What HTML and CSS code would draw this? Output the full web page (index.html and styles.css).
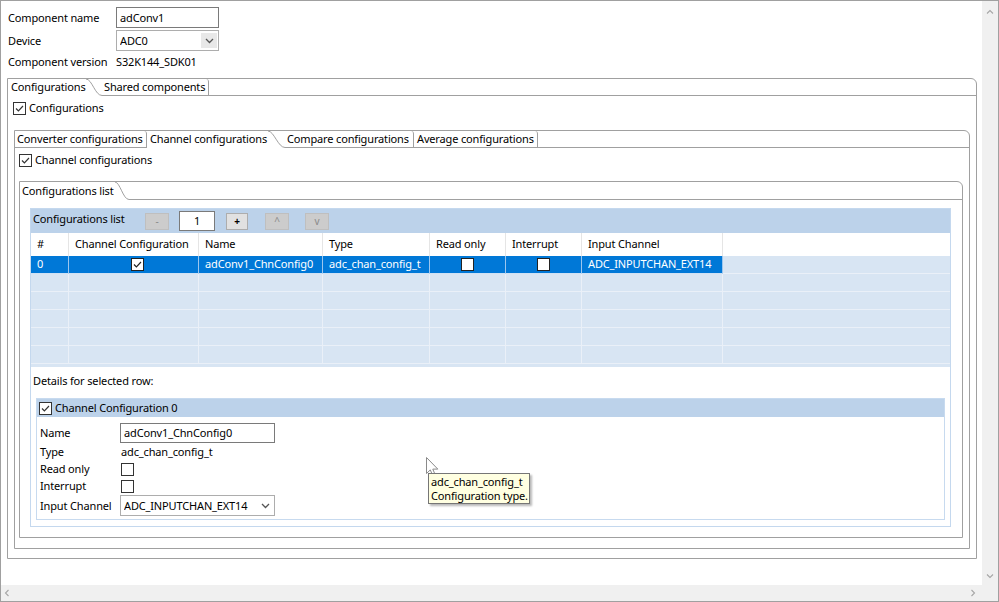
FILE: index.html
```html
<!DOCTYPE html>
<html>
<head>
<meta charset="utf-8">
<link rel="stylesheet" href="styles.css">
</head>
<body>
<div class="window">
  <div class="pane">
    <div class="form">
      <div class="lbl">Component name</div>
      <div class="input w103">adConv1</div>
      <div class="lbl">Device</div>
      <div class="select w103 sel-dev"><span class="stext">ADC0</span><span class="dd"><svg width="9" height="6" viewBox="0 0 9 6"><path d="M1 1l3.5 3.5L8 1" fill="none" stroke="#555" stroke-width="1.3"/></svg></span></div>
      <div class="lbl">Component version</div>
      <div class="val">S32K144_SDK01</div>
    </div>

    <div class="folder f1">
      <div class="tabs">
        <div class="tab sel t-conf">Configurations</div>
        <svg class="curve" width="16" height="17" viewBox="0 0 16 17"><path d="M0 0C6 0 9 16.5 16 16.5" fill="none" stroke="#a0a0a0"/></svg>
        <div class="tab un t-shared">Shared components</div>
        <div class="fill"></div>
      </div>
      <div class="fbody fb1">
        <div class="chkrow">
          <svg class="cb" width="13" height="13" viewBox="0 0 13 13"><rect x=".5" y=".5" width="12" height="12" fill="#fff" stroke="#333"/><path d="M3 6.5l2.4 2.4L10 4" fill="none" stroke="#333" stroke-width="1.2"/></svg>
          <span>Configurations</span>
        </div>

        <div class="folder f2">
          <div class="tabs">
            <div class="tab un t-conv">Converter configurations</div>
            <div class="tab sel t-chan">Channel configurations</div>
            <svg class="curve" width="17" height="17" viewBox="0 0 17 17"><path d="M0 0C6 0 10 16.5 17 16.5" fill="none" stroke="#a0a0a0"/></svg>
            <div class="tab un t-comp">Compare configurations</div>
            <div class="tab un t-avg">Average configurations</div>
            <div class="fill"></div>
          </div>
          <div class="fbody fb2">
            <div class="chkrow">
              <svg class="cb" width="13" height="13" viewBox="0 0 13 13"><rect x=".5" y=".5" width="12" height="12" fill="#fff" stroke="#333"/><path d="M3 6.5l2.4 2.4L10 4" fill="none" stroke="#333" stroke-width="1.2"/></svg>
              <span>Channel configurations</span>
            </div>

            <div class="folder f3">
              <div class="tabs tabs3">
                <div class="tab sel t-list">Configurations list</div>
                <svg class="curve" width="14" height="18" viewBox="0 0 14 18"><path d="M0 0C5 0 8 17.5 14 17.5" fill="none" stroke="#a0a0a0"/></svg>
                <div class="fill"></div>
              </div>
              <div class="fbody fb3">
                <div class="section">
                  <div class="shead">
                    <div class="stitle">Configurations list</div>
                    <div class="btn dis b-minus">-</div>
                    <div class="numin">1</div>
                    <div class="btn b-plus">+</div>
                    <div class="btn dis b-up">^</div>
                    <div class="btn dis b-down">v</div>
                  </div>
                  <div class="grid head">
                    <div class="hc">#</div>
                    <div class="hc">Channel Configuration</div>
                    <div class="hc">Name</div>
                    <div class="hc">Type</div>
                    <div class="hc">Read only</div>
                    <div class="hc">Interrupt</div>
                    <div class="hc">Input Channel</div>
                    <div class="hc last"></div>
                  </div>
                  <div class="grid row selrow">
                    <div class="c s">0</div>
                    <div class="c s ctr cc"><svg class="cb" width="13" height="13" viewBox="0 0 13 13"><rect x=".5" y=".5" width="12" height="12" fill="#fff" stroke="#222"/><path d="M3 6.5l2.4 2.4L10 4" fill="none" stroke="#222" stroke-width="1.2"/></svg></div>
                    <div class="c s">adConv1_ChnConfig0</div>
                    <div class="c s">adc_chan_config_t</div>
                    <div class="c s ctr"><svg class="cb" width="13" height="13" viewBox="0 0 13 13"><rect x=".5" y=".5" width="12" height="12" fill="#fff" stroke="#222"/></svg></div>
                    <div class="c s ctr"><svg class="cb" width="13" height="13" viewBox="0 0 13 13"><rect x=".5" y=".5" width="12" height="12" fill="#fff" stroke="#222"/></svg></div>
                    <div class="c s">ADC_INPUTCHAN_EXT14</div>
                    <div class="c last"></div>
                  </div>
                  <div class="grid row"><div class="c"></div><div class="c"></div><div class="c"></div><div class="c"></div><div class="c"></div><div class="c"></div><div class="c"></div><div class="c last"></div></div>
                  <div class="grid row"><div class="c"></div><div class="c"></div><div class="c"></div><div class="c"></div><div class="c"></div><div class="c"></div><div class="c"></div><div class="c last"></div></div>
                  <div class="grid row"><div class="c"></div><div class="c"></div><div class="c"></div><div class="c"></div><div class="c"></div><div class="c"></div><div class="c"></div><div class="c last"></div></div>
                  <div class="grid row"><div class="c"></div><div class="c"></div><div class="c"></div><div class="c"></div><div class="c"></div><div class="c"></div><div class="c"></div><div class="c last"></div></div>
                  <div class="grid row"><div class="c"></div><div class="c"></div><div class="c"></div><div class="c"></div><div class="c"></div><div class="c"></div><div class="c"></div><div class="c last"></div></div>
                  <div class="strip"></div>
                  <div class="dlabel">Details for selected row:</div>
                  <div class="group">
                    <div class="ghead">
                      <svg class="cb" width="13" height="13" viewBox="0 0 13 13"><rect x=".5" y=".5" width="12" height="12" fill="#fff" stroke="#333"/><path d="M3 6.5l2.4 2.4L10 4" fill="none" stroke="#333" stroke-width="1.2"/></svg>
                      <span>Channel Configuration 0</span>
                    </div>
                    <div class="gbody">
                      <div class="glbl">Name</div>
                      <div class="input w155">adConv1_ChnConfig0</div>
                      <div class="glbl">Type</div>
                      <div class="gval">adc_chan_config_t</div>
                      <div class="glbl">Read only</div>
                      <div class="gval"><svg class="cb" width="13" height="13" viewBox="0 0 13 13"><rect x=".5" y=".5" width="12" height="12" fill="#fff" stroke="#333"/></svg></div>
                      <div class="glbl">Interrupt</div>
                      <div class="gval"><svg class="cb" width="13" height="13" viewBox="0 0 13 13"><rect x=".5" y=".5" width="12" height="12" fill="#fff" stroke="#333"/></svg></div>
                      <div class="glbl">Input Channel</div>
                      <div class="select w155"><span class="stext">ADC_INPUTCHAN_EXT14</span><span class="dd2"><svg width="9" height="6" viewBox="0 0 9 6"><path d="M1 1l3.5 3.5L8 1" fill="none" stroke="#555" stroke-width="1.3"/></svg></span></div>
                    </div>
                  </div>
                </div>
              </div>
            </div>
          </div>
        </div>
      </div>
    </div>
  </div>
  <div class="vscroll">
    <svg width="8" height="5" viewBox="0 0 8 5"><path d="M1 4.5L4 1.5L7 4.5" fill="none" stroke="#a6a6a6" stroke-width="1.1"/></svg>
    <svg width="8" height="5" viewBox="0 0 8 5"><path d="M1 .5L4 3.5L7 .5" fill="none" stroke="#a6a6a6" stroke-width="1.1"/></svg>
  </div>
  <div class="hscroll">
    <svg width="5" height="8" viewBox="0 0 5 8"><path d="M4.5 1L1.5 4L4.5 7" fill="none" stroke="#a6a6a6" stroke-width="1.1"/></svg>
    <svg width="5" height="8" viewBox="0 0 5 8"><path d="M.5 1L3.5 4L.5 7" fill="none" stroke="#a6a6a6" stroke-width="1.1"/></svg>
  </div>
  <div class="corner"></div>

  <svg class="cursor" width="13" height="20" viewBox="0 0 13 20"><path d="M.5 .5V16.5L4.3 12.9L6.8 18.8L9.2 17.8L6.8 12.1H11.8Z" fill="#fff" stroke="#8a8a8a" stroke-linejoin="round"/></svg>
  <div class="tooltip">adc_chan_config_t<br>Configuration type.</div>
</div>
</body>
</html>
```

FILE: styles.css
```css
* { box-sizing: border-box; }
html, body { margin: 0; padding: 0; background: #fff; }
body {
  font-family: "Noto Sans", "Open Sans", sans-serif;
  font-size: 11px;
  letter-spacing: -0.15px;
  color: #000;
}

.window {
  position: relative;
  width: 999px;
  height: 602px;
  border: 1px solid #a0a0a0;
  display: grid;
  grid-template-columns: 981px 16px;
  grid-template-rows: 584px 16px;
  overflow: hidden;
}

.pane {
  background: #fff;
  padding: 6px 0 0 6px;
  overflow: hidden;
}

/* scrollbars */
.vscroll {
  background: #f0f0f0;
  display: flex;
  flex-direction: column;
  justify-content: space-between;
  align-items: center;
  padding: 8px 0 6px 0;
}
.hscroll {
  background: #f0f0f0;
  display: flex;
  justify-content: space-between;
  align-items: center;
  padding: 0 6px 0 3px;
}
.corner { background: #f0f0f0; }

/* top form */
.form {
  display: grid;
  grid-template-columns: 108px 103px;
  grid-template-rows: 21px 21px 17px;
  row-gap: 2px;
  align-items: center;
  margin-left: 1px;
}
.lbl { line-height: 16px; white-space: nowrap; }
.val { line-height: 16px; white-space: nowrap; }
.input {
  height: 21px;
  border: 1px solid #7a7a7a;
  background: #fff;
  padding-left: 3px;
  line-height: 19px;
  white-space: nowrap;
  overflow: hidden;
}
.select {
  height: 21px;
  border: 1px solid #adadad;
  background: #fff;
  display: flex;
  align-items: center;
  padding-left: 3px;
  white-space: nowrap;
}
.select .stext { flex: 1; line-height: 19px; overflow: hidden; }
.dd {
  width: 16px;
  height: 15px;
  margin-right: 1px;
  background: #e8e8e8;
  display: flex;
  align-items: center;
  justify-content: center;
}
.dd2 {
  width: 16px;
  height: 15px;
  margin-right: 1px;
  display: flex;
  align-items: center;
  justify-content: center;
}
.w103 { width: 103px; }
.w155 { width: 155px; }

/* tab folders */
.folder {
  border: 1px solid #a0a0a0;
  border-top-right-radius: 6px;
  background: #fff;
}
.f1 { width: 970px; margin-top: 8px; }
.f2 { margin-top: 14px; margin-left: 1px; }
.f3 { margin-top: 13px; }

.tabs { display: flex; height: 17px; }
.tabs3 { height: 18px; }
.tab {
  height: 100%;
  line-height: 16px;
  white-space: nowrap;
  flex: none;
}
.tabs3 .tab { line-height: 17px; }
.tab.un {
  border-bottom: 1px solid #a0a0a0;
  border-right: 1px solid #a0a0a0;
  border-top-right-radius: 3px;
}
.tabs .fill { flex: 1; border-bottom: 1px solid #a0a0a0; }
.curve { flex: none; display: block; }

.t-conf { width: 78px; padding-left: 3px; }
.t-shared { width: 107px; padding-left: 2px; }
.t-conv { width: 132px; padding-left: 2px; }
.t-chan { width: 121px; padding-left: 3px; }
.t-comp { width: 129px; padding-left: 2px; }
.t-avg { width: 124px; padding-left: 3px; }
.t-list { width: 95px; padding-left: 2px; }

.fb1 { padding: 4px 6px 9px 5px; }
.fb2 { padding: 4px 6px 10px 4px; }
.fb3 { padding: 8px 11px 10px 10px; }

.chkrow {
  display: flex;
  align-items: center;
  gap: 3px;
  height: 16px;
  line-height: 16px;
}
.cb { display: block; flex: none; }

/* section */
.section {
  border: 1px solid #c4d8ee;
  background: #fff;
}
.shead {
  height: 24px;
  background: #bcd2ea;
  display: flex;
  align-items: center;
  padding-left: 2px;
}
.stitle { width: 112px; line-height: 16px; margin-top: -4px; white-space: nowrap; }
.btn {
  height: 17px;
  border: 1px solid #adadad;
  background: #e1e1e1;
  text-align: center;
  line-height: 15px;
  font-size: 10px;
  color: #000;
}
.btn.dis { background: #cccccc; border-color: #bfbfbf; color: #8a8a8a; }
.b-minus { width: 24px; }
.numin {
  width: 36px;
  height: 20px;
  margin-left: 10px;
  border: 1px solid #7a7a7a;
  background: #fff;
  text-align: center;
  line-height: 18px;
}
.b-plus { width: 22px; margin-left: 11px; font-weight: bold; }
.b-up { width: 24px; margin-left: 17px; }
.b-down { width: 24px; margin-left: 16px; }

.grid {
  display: grid;
  grid-template-columns: 38px 130px 124px 107px 76px 76px 141px 1fr;
}
.head { height: 23px; background: #fff; }
.hc {
  border-right: 1px solid #e5e5e5;
  padding-left: 6px;
  line-height: 22px;
  white-space: nowrap;
}
.hc.last { border-right: 0; }

.row { height: 18px; }
.c {
  background: #d8e5f3;
  border-right: 1px solid #eaf0f8;
  border-bottom: 1px solid #eaf0f8;
  padding-left: 6px;
  line-height: 16px;
  white-space: nowrap;
  overflow: hidden;
}
.c.last { border-right: 0; }
.c.s {
  background: #0078d7;
  color: #fff;
  border-right-color: #9cc6ee;
  border-bottom-color: #cfe1f4;
}
.c.ctr { display: flex; align-items: center; justify-content: center; padding-left: 0; }
.c.cc { padding-left: 8px; }

.strip { height: 3px; background: #d8e5f3; }

.dlabel { padding: 6px 0 9px 2px; line-height: 16px; }

.group {
  margin: 0 5px 6px 5px;
  border: 1px solid #c7daef;
}
.ghead {
  height: 18px;
  background: #bcd2ea;
  display: flex;
  align-items: center;
  gap: 3px;
  padding-left: 2px;
  line-height: 16px;
}
.gbody {
  display: grid;
  grid-template-columns: 80px 1fr;
  grid-template-rows: 20px 18px 16px 18px 21px;
  align-items: center;
  padding: 6px 0 3px 3px;
}
.gbody .input { height: 20px; line-height: 18px; }
.glbl { line-height: 16px; white-space: nowrap; }
.gval { line-height: 16px; padding-left: 1px; }

/* overlays */
.cursor { position: absolute; left: 425px; top: 456px; }
.tooltip {
  position: absolute;
  left: 427px;
  top: 472px;
  width: 102px;
  height: 31px;
  background: #ffffe1;
  border: 1px solid #767676;
  box-shadow: 2px 2px 2px rgba(0, 0, 0, 0.28);
  padding: 1px 0 0 2px;
  line-height: 14px;
  white-space: nowrap;
}
```
